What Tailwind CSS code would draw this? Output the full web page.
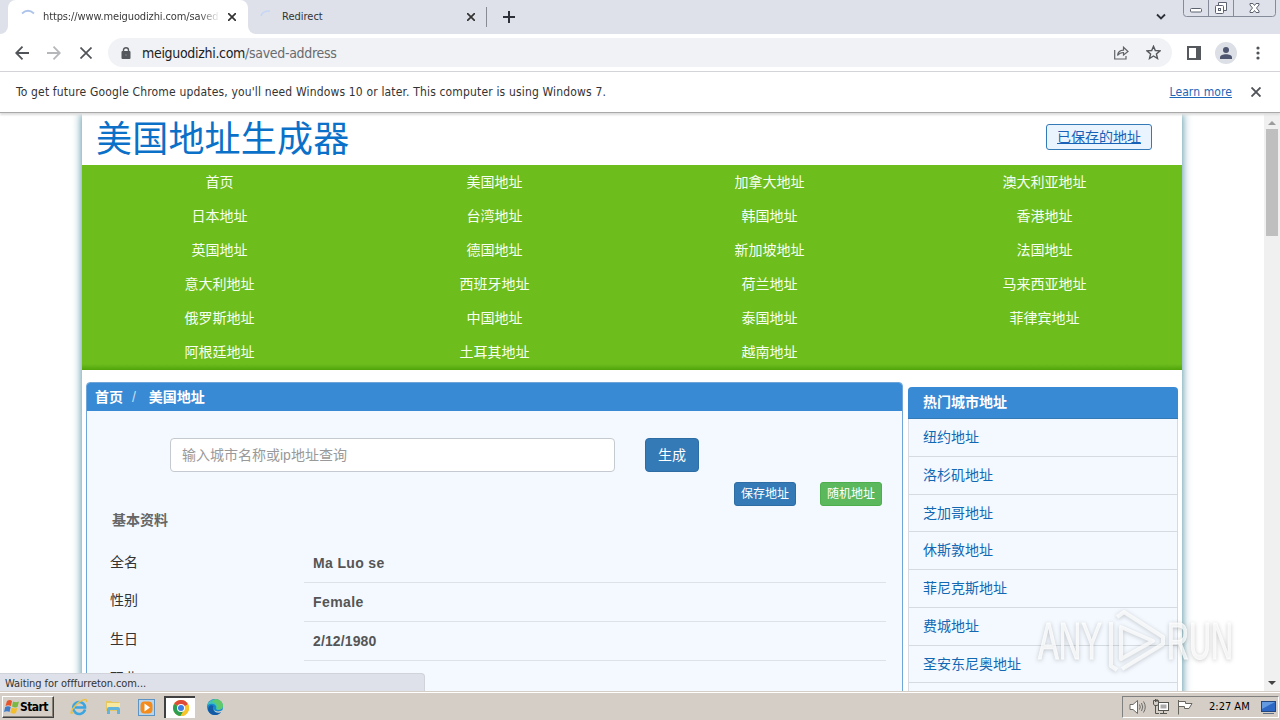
<!DOCTYPE html>
<html lang="zh-CN">

<head>
    <meta charset="UTF-8">
    <meta name="viewport" content="width=device-width, initial-scale=1.0">
    <title>美国地址生成器</title>
    <script src="https://cdn.jsdelivr.net/npm/@tailwindcss/browser@4"></script>
</head>

<body class="w-[1280px] h-[720px] overflow-hidden bg-white flex flex-col relative font-['DejaVu_Sans_Condensed','Noto_Sans_CJK_SC',sans-serif] text-[#333]">
    <!-- Tab strip -->
    <header class="h-[34px] shrink-0 bg-[#dee1e9] flex relative">
        <div class="w-2 h-full bg-white"><div class="w-full h-full bg-[#dee1e9] rounded-br-lg"></div></div>
        <div class="w-[240px] h-full bg-white rounded-t-lg flex items-center pl-3">
            <svg class="w-4 h-4 shrink-0" viewBox="0 0 16 16" fill="none"><path d="M2 4.5Q8-1 14 4.5" stroke="#aec3ec" stroke-width="1.8"/></svg>
            <span class="ml-[7px] w-[177px] overflow-hidden whitespace-nowrap text-[11px] tracking-[-0.12px] bg-linear-to-r from-[#333] from-88% to-transparent bg-clip-text text-transparent">https://www.meiguodizhi.com/saved</span>
            <svg class="w-2 h-2 shrink-0 ml-2" viewBox="0 0 8 8"><path d="M0 0L8 8M8 0L0 8" stroke="#333" stroke-width="1.7"/></svg>
        </div>
        <div class="w-2 h-full bg-white"><div class="w-full h-full bg-[#dee1e9] rounded-bl-lg"></div></div>
        <div class="flex items-center w-[231px] border-r border-[#878b93] h-5 mt-[7px]">
            <svg class="w-4 h-4 shrink-0 ml-0.5" viewBox="0 0 16 16" fill="none"><path d="M3 7Q4 2 12 2" stroke="#c5d6f5" stroke-width="1.6"/></svg>
            <span class="ml-2 text-[11px] flex-1">Redirect</span>
            <svg class="w-2 h-2 mr-[11px]" viewBox="0 0 8 8"><path d="M0 0L8 8M8 0L0 8" stroke="#333" stroke-width="1.7"/></svg>
        </div>
        <svg class="w-3 h-3 ml-4 mt-[11px]" viewBox="0 0 12 12"><path d="M6 0V12M0 6H12" stroke="#2d3038" stroke-width="2"/></svg>
        <svg class="w-2.5 h-2 ml-auto mr-[114px] mt-[13px]" viewBox="0 0 10 8" fill="none"><path d="M1 1.5L5 5.5L9 1.5" stroke="#2d3038" stroke-width="1.8"/></svg>
        <svg class="absolute top-0 left-[1183px]" width="93" height="17" viewBox="0 0 93 17" fill="none" stroke="#858b99">
            <path d="M.5 0V13.5Q.5 16.5 3.5 16.5H89.500Q92.500 16.500 92.500 13.500V0M25.500 0V16M50.500 0V16"/>
            <g stroke="#5d6270"><rect x="7.500" y="8.500" width="11" height="3.500" rx="1" fill="#fff"/>
                <path d="M35.500 5.500V2.500H43.500V10.500H40" fill="#fff"/><rect x="32.500" y="5.500" width="8" height="8" rx="1" fill="#fff"/><rect x="35.500" y="8.500" width="2" height="2"/>
                <path d="M67 3.500H70L71.500 5.500L73 3.500H76V5L73.500 8L76 11V12.500H73L71.500 10.500L70 12.500H67V11L69.500 8L67 5Z" fill="#fff"/></g>
        </svg>
    </header>

    <!-- Address bar -->
    <div class="h-[38px] shrink-0 flex items-center border-b border-[#d2d4d7] pl-[15px] pr-2 relative">
        <svg class="w-[14px] h-[14px]" viewBox="0 0 14 14" fill="none" stroke="#505357" stroke-width="1.800"><path d="M14 7H1M7.500 .7L1.200 7L7.500 13.300"/></svg>
        <svg class="w-[14px] h-[14px] ml-[18px]" viewBox="0 0 14 14" fill="none" stroke="#b5b7ba" stroke-width="1.800"><path d="M0 7H13M6.500 .7L12.800 7L6.500 13.300"/></svg>
        <svg class="w-3 h-3 ml-[19px]" viewBox="0 0 12 12" stroke="#505357" stroke-width="1.700"><path d="M.5 .5L11.500 11.500M11.500 .5L.5 11.500"/></svg>
        <div class="ml-4 w-[1064px] h-[29px] rounded-full bg-[#f0f2f5] flex items-center pl-[13px] pr-[11px]">
            <svg class="w-[10px] h-3" viewBox="0 0 10 12"><rect y="4" x=".5" width="9" height="8" rx="1" fill="#55585d"/><path d="M2.500 5V3a2.500 2.300 0 015 0V5" fill="none" stroke="#55585d" stroke-width="1.400"/><circle cx="5" cy="8" r=".8" fill="#888"/></svg>
            <span class="ml-[11px] text-sm text-[#202124] tracking-[-0.31px]">meiguodizhi.com<span class="text-[#686b70]">/saved-address</span></span>
            <svg class="w-[15px] h-[14px] ml-auto" viewBox="0 0 15 14" fill="none" stroke="#606368" stroke-width="1.200"><path d="M.7 4V13H12V10M3.500 9.500C4 6 6 4.300 9.500 4.200V1.200L14 5.500L9.500 9V6.500C7 6.500 5 7.500 3.500 9.500Z"/></svg>
            <svg class="w-[15px] h-[15px] ml-[17px]" viewBox="0 0 15 15" fill="none" stroke="#55585d" stroke-width="1.400"><path d="M7.500 1.300L9.300 5.500L14 5.900L10.400 8.900L11.500 13.500L7.500 11L3.500 13.500L4.600 8.900L1 5.900L5.700 5.500Z"/></svg>
        </div>
        <svg class="w-[14px] h-[14px] ml-[15px]" viewBox="0 0 14 14"><path d="M0 0H14V14H0ZM2 2V12H9V2Z" fill="#55585d" fill-rule="evenodd"/></svg>
        <svg class="w-[22px] h-[22px] ml-[14px]" viewBox="0 0 22 22"><circle cx="11" cy="11" r="11" fill="#dcdfe5"/><circle cx="11" cy="8" r="3" fill="#4d5570"/><path d="M5 17V15.500C5 13.300 8 12.200 11 12.200S17 13.300 17 15.500V17Z" fill="#4d5570"/></svg>
        <svg class="w-1 h-[14px] ml-[19px]" viewBox="0 0 4 14" fill="#505357"><circle cx="2" cy="2" r="1.600"/><circle cx="2" cy="7" r="1.600"/><circle cx="2" cy="12" r="1.600"/></svg>
    </div>

    <!-- Update notice -->
    <div class="h-[41px] shrink-0 flex items-center pl-4 pr-[19px] bg-white border-b border-[#a9a9a9] text-xs pb-px relative z-10 shadow-[0_2px_2px_#ddd]">
        <span class="tracking-[0.16px]">To get future Google Chrome updates, you'll need Windows 10 or later. This computer is using Windows 7.</span>
        <a class="ml-auto text-[#1d66b8] underline tracking-[0.1px]">Learn more</a>
        <svg class="w-[10px] h-[10px] ml-[19px]" viewBox="0 0 10 10"><path d="M.5 .5L9.500 9.500M9.500 .5L.5 9.500" stroke="#505357" stroke-width="1.900"/></svg>
    </div>

    <!-- Web page -->
    <div class="h-[578px] shrink-0 flex overflow-hidden relative text-sm font-['Liberation_Sans','Noto_Sans_CJK_SC',sans-serif]">
        <main class="ml-[82px] w-[1100px] h-[620px] bg-white shadow-[0_0_9px_#3d8599]">
            <div class="h-[52px] flex justify-between pl-[14px] pr-[30px]">
                <h1 class="text-[36px] leading-[54px] tracking-[0.2px] text-[#0a70c8]">美国地址生成器</h1>
                <a class="mt-[11px] h-[26px] w-[106px] text-center leading-[25px] border border-[#337ab7] bg-[#e9f4ff] rounded-[3px] text-[#1762b6] underline">已保存的地址</a>
            </div>
            <nav class="h-[205px] bg-linear-to-t from-[#4fa408] to-[#6dbd1d] to-[6px] grid grid-cols-4 auto-rows-[34px] text-center leading-[34px] text-[#f6fff0]">
                <a>首页</a><a>美国地址</a><a>加拿大地址</a><a>澳大利亚地址</a>
                <a>日本地址</a><a>台湾地址</a><a>韩国地址</a><a>香港地址</a>
                <a>英国地址</a><a>德国地址</a><a>新加坡地址</a><a>法国地址</a>
                <a>意大利地址</a><a>西班牙地址</a><a>荷兰地址</a><a>马来西亚地址</a>
                <a>俄罗斯地址</a><a>中国地址</a><a>泰国地址</a><a>菲律宾地址</a>
                <a>阿根廷地址</a><a>土耳其地址</a><a>越南地址</a>
            </nav>
            <div class="flex items-start pl-1 pt-3 gap-[5px]">
                <section class="w-[817px] h-[400px] border border-[#6fa5d8] rounded-t bg-[#f3f9ff]">
                    <div class="h-7 bg-[#398ad4] leading-[28px] pl-2 text-white font-bold rounded-t-[3px]">首页<span class="font-normal text-[#c8dcf0] mx-[9px]">/</span> 美国地址</div>
                    <div class="flex mt-[27px] ml-[83px] gap-[30px]">
                        <div class="w-[445px] h-[34px] bg-white border border-[#c5cad0] rounded pl-[11px] leading-[32px] text-[#999]">输入城市名称或ip地址查询</div>
                        <button class="w-[54px] h-[34px] rounded border border-[#2e6da4] bg-[#337ab7] text-white">生成</button>
                    </div>
                    <div class="flex justify-end gap-6 mt-[10px] pr-5 text-xs">
                        <button class="w-[62px] h-6 rounded-[3px] border border-[#2e6da4] bg-[#337ab7] text-white">保存地址</button>
                        <button class="w-[62px] h-6 rounded-[3px] border border-[#4cae4c] bg-[#5cb85c] text-white">随机地址</button>
                    </div>
                    <h2 class="ml-[25px] mt-1 leading-5 font-bold text-[#666]">基本资料</h2>
                    <dl class="mt-[14px] ml-[23px] mr-4 grid grid-cols-[194px_1fr] auto-rows-[39px]">
                        <dt class="leading-[36px]">全名</dt><dd class="border-b border-[#dce2e8] pl-[9px] leading-[39px] font-bold text-[#555] tracking-[0.35px]">Ma Luo se</dd>
                        <dt class="leading-[34px]">性别</dt><dd class="border-b border-[#dce2e8] pl-[9px] leading-[39px] font-bold text-[#555] tracking-[0.42px]">Female</dd>
                        <dt class="leading-[34px]">生日</dt><dd class="border-b border-[#dce2e8] pl-[9px] leading-[39px] font-bold text-[#555] tracking-[0.12px]">2/12/1980</dd>
                        <dt class="leading-[34px]">职业</dt><dd></dd>
                    </dl>
                </section>
                <aside class="w-[270px] h-[400px] mt-[5px] border-x border-[#d5dbe0] rounded-t bg-[#f3f9ff] text-[#1268b3]">
                    <h3 class="h-[32px] -mx-px pl-[15px] leading-[30px] bg-[#398ad4] border-b border-[#337ab7] text-white font-bold rounded-t">热门城市地址</h3>
                    <ul class="[&>li]:h-[37.75px] [&>li]:leading-[37px] [&>li]:pl-[14px] [&>li]:border-b [&>li]:border-[#d5dbe0]">
                        <li>纽约地址</li>
                        <li>洛杉矶地址</li>
                        <li>芝加哥地址</li>
                        <li>休斯敦地址</li>
                        <li>菲尼克斯地址</li>
                        <li>费城地址</li>
                        <li>圣安东尼奥地址</li>
                    </ul>
                </aside>
            </div>
        </main>
        <!-- Scrollbar -->
        <div class="ml-auto w-4 h-full bg-[#f0f0f0] flex flex-col items-center">
            <svg class="w-2 h-1 mt-2 shrink-0" viewBox="0 0 8 4"><path d="M4 0L8 4H0Z" fill="#9c9c9c"/></svg>
            <div class="w-3 h-[107px] mt-[4px] bg-[#bfbfbf]"></div>
            <svg class="w-2 h-1 mt-auto mb-[6px]" viewBox="0 0 8 4"><path d="M0 0H8L4 4Z" fill="#444"/></svg>
        </div>
        <!-- Load status bubble -->
        <div class="absolute left-0 bottom-0 w-[425px] h-[18px] bg-[#dee1e9] border-t border-r border-[#d0d3da] rounded-tr pl-[5px] leading-[19px] text-[11px] tracking-[-0.08px] font-['DejaVu_Sans_Condensed',sans-serif]">Waiting for offfurreton.com...</div>
    </div>

    <!-- Taskbar -->
    <footer class="h-[29px] shrink-0 bg-[#d5cec6] border-t border-[#d5cec6] shadow-[inset_0_1px_#fff] flex items-center pl-0.5 pt-0.5">
        <button class="w-[52px] h-[22px] bg-[#d5cec6] border border-t-white border-l-white border-r-[#404040] border-b-[#404040] shadow-[inset_-1px_-1px_#858078] flex items-center pl-px text-[12px] font-bold text-black">
            <svg class="w-4 h-4 shrink-0" viewBox="0 0 16 16"><path d="M3 2Q6 0 8 2L7 7Q4 5.500 1.500 7Z" fill="#e5552d"/><path d="M9 2.500Q12 4 15 2.500L13.500 8Q11 9 8 7.500Z" fill="#79b843"/><path d="M1.200 8Q4 6.500 6.700 8L5.500 13Q3 11.500 0 13Z" fill="#3e7cc9"/><path d="M7.700 8.500Q10 10 13.300 9L12 14Q9 15.500 6.400 13.500Z" fill="#f3be29"/></svg>
            <span class="tracking-[-0.6px]">Start</span>
        </button>
        <svg class="w-[18px] h-[18px] ml-4" viewBox="0 0 18 18" fill="none"><path d="M15 11.500A6 6 0 1 1 15 8.500V9.500H5" stroke="#39a5e1" stroke-width="2.600"/><path d="M4 14C-1 18 1 12 5 8C10 2 18-1 16.500 4" stroke="#ecc046" stroke-width="1.500"/></svg>
        <svg class="w-[18px] h-[18px] ml-4" viewBox="0 0 18 18"><path d="M2 3H7L8 4H15V13H2Z" fill="#e6c862"/><path d="M3 5H16V11H3Z" fill="#f9e9a0"/><path d="M3 16V11Q3 9 5 9H14Q16 9 16 11V16H13V12H6V16Z" fill="#62b4dc"/></svg>
        <svg class="w-[17px] h-[17px] ml-[16px]" viewBox="0 0 17 17"><rect x=".5" y=".5" width="16" height="16" fill="#b9d5eb" stroke="#5e94c3"/><rect x="2.500" y="2.500" width="12" height="12" rx="4" fill="#f38b1d"/><path d="M6.500 4.500L12 8.500L6.500 12.500Z" fill="#fff"/></svg>
        <div class="ml-[9px] w-[31px] h-[22px] bg-white border-t-2 border-l-2 border-[#404040] flex items-center justify-center">
            <svg class="w-4 h-4" viewBox="0 0 16 16"><circle cx="8" cy="8" r="8" fill="#f7c52b"/><path d="M8 8L1.100 4A8 8 0 0 1 15 4.300Z" fill="#df4a38"/><path d="M8 8L1.100 4A8 8 0 0 0 7.500 16L11 10Z" fill="#2e9e50"/><path d="M8 4H15L11.500 10L7.500 16A8 8 0 0 0 15 4Z" fill="#f7c52b"/><circle cx="8" cy="8" r="4" fill="#fff"/><circle cx="8" cy="8" r="3" fill="#3c7de6"/></svg>
        </div>
        <svg class="w-4 h-4 ml-[12px]" viewBox="0 0 16 16"><circle cx="8" cy="8" r="8" fill="#1688cf"/><path d="M1 4.500C4-1.500 15-1 16 7C16 11 11 12 9 10C11 6 5 3 1 6Z" fill="#3fc3b8"/><path d="M8 0C14 0 16 4 16 7C15 11 11 11 9.500 10C11 5 8 3 5 3Z" fill="#60c96c"/><path d="M6.500 7C4 12 10 16 14.500 12.500C11 18 3 17 1 11C1 7 4 5 6.500 7Z" fill="#155aa5"/><path d="M7 8C5.500 12 11 14 16 10.800L15 13C9 15 6 12 7 8Z" fill="#d5cec6"/></svg>
        <div class="ml-auto mr-px w-[157px] h-[22px] border border-t-[#808080] border-l-[#808080] border-r-white border-b-white flex items-center pl-[6px] text-[11px] text-black">
            <svg class="w-[17px] h-4" viewBox="0 0 17 16" fill="none" stroke="#6b6b68"><path d="M1 5.500H4L8.500 1.500V14.500L4 10.500H1Z" fill="#fff"/><path d="M10.500 5.500Q12 8 10.500 10.500M12.500 4Q15 8 12.500 12M14.500 2.500Q18 8 14.500 13.500"/></svg>
            <svg class="w-4 h-4 ml-[7px]" viewBox="0 0 16 16" fill="none" stroke="#55554f"><rect x="5.500" y="3.500" width="10" height="8" fill="#fff"/><rect x="7.500" y="5.500" width="6" height="4" fill="#aaa" stroke="none"/><path d="M7 14.500H14M10.500 12V14M2.500 6V14.500H6M.5 1.500H5.500V5L4.500 6.500H1.500L.5 5ZM2.500 0V3M4 0V3"/></svg>
            <svg class="w-4 h-4 ml-2" viewBox="0 0 16 16" fill="#fff" stroke="#66665f"><path d="M1.500 1V15.500M1.500 2.500H8.500V4.500H15L12 9.500H7.500V7.500H1.500Z"/></svg>
            <span class="ml-[16px]">2:27 AM</span>
            <svg class="w-[15px] h-[13px] ml-auto mr-0.5" viewBox="0 0 15 13"><rect x=".5" y=".5" width="14" height="10" fill="#2d68c4" stroke="#23467f"/><path d="M1 1H14L1 8Z" fill="#649be0"/><path d="M2 12.500H13" stroke="#5c7188"/></svg>
        </div>
    </footer>

    <!-- Watermark -->
    <svg class="absolute left-[1030px] top-[604px] z-20 drop-shadow-[0_1px_2px_#0004]" width="210" height="76" viewBox="0 0 210 76" fill="#ffffffbb">
        <g font-family="Liberation Sans" font-size="52" stroke="#ffffffbb">
            <text x="8" y="55" textLength="64" lengthAdjust="spacingAndGlyphs">ANY</text>
            <text x="137" y="55" textLength="66" lengthAdjust="spacingAndGlyphs">RUN</text>
        </g>
        <g fill="none" stroke="#ffffffbb" stroke-width="4" stroke-linejoin="round">
            <path d="M81 18V62L87 66M91 23V55L123 37Z"/>
            <path d="M87 13L94 8L133 33V40L92 65"/>
        </g>
    </svg>
</body>

</html>
